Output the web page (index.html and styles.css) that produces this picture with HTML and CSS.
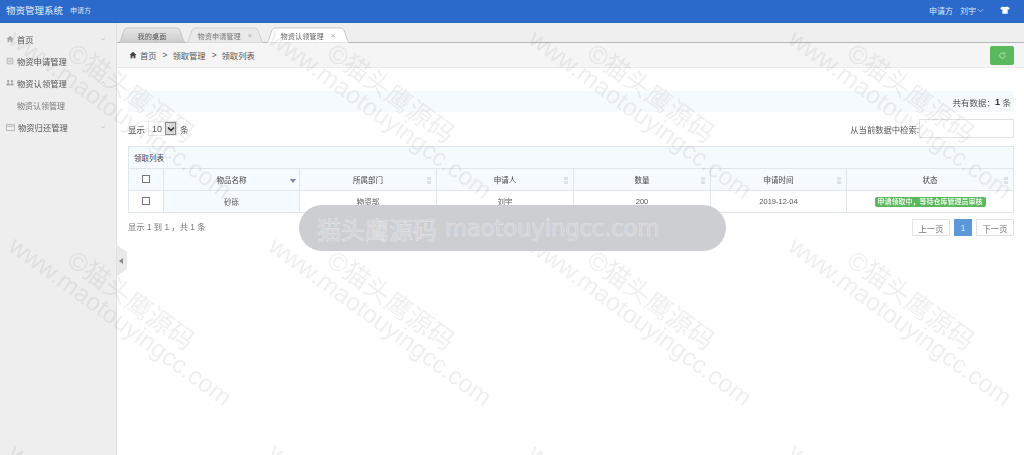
FILE: index.html
```html
<!DOCTYPE html>
<html lang="zh-CN">
<head>
<meta charset="utf-8">
<title>物资管理系统</title>
<link rel="stylesheet" href="styles.css">
</head>
<body>
<div class="app">
  <header class="topbar">
    <div class="brand"><span class="brand-name">物资管理系统</span><span class="brand-role">申请方</span></div>
    <div class="top-right">
      <span>申请方</span>
      <span class="user">刘宇<svg class="chev" viewBox="0 0 8 5"><path d="M1 1l3 3 3-3" fill="none" stroke="#dbe6f7" stroke-width=".8"/></svg></span>
      <svg class="shirt" viewBox="0 0 12 10"><path d="M3.600 .5L0 2.400l1.300 2.300 1.400-.6V9.600h6.600V4.100l1.400.6L12 2.400 8.400 .5C7.900 1.600 4.100 1.600 3.600 .5z" fill="#fff"/></svg>
    </div>
  </header>
  <div class="body-row">
    <aside class="sidebar">
      <div class="nav-item"><svg class="nav-icon" viewBox="0 0 10 10"><path d="M5 1L.5 5h1.500v4h2.200V6.500h1.600V9H8V5h1.500z" fill="#a8a8a8"/></svg><span class="nav-text">首页</span><svg class="nav-chev" viewBox="0 0 8 5"><path d="M1 1l3 3 3-3" fill="none" stroke="#bdbdbd" stroke-width=".8"/></svg></div>
      <div class="nav-item"><svg class="nav-icon" viewBox="0 0 10 10"><path d="M1.500 1.500h7v7h-7zM3 4h4M3 6h4" fill="none" stroke="#aaa"/></svg><span class="nav-text">物资申请管理</span></div>
      <div class="nav-item"><svg class="nav-icon" viewBox="0 0 10 10"><path d="M.5 8c0-2 .8-3 2.200-3S5 6 5 8zM5.500 8c0-2 .8-3 2-3s2 1 2 3zM2.700 4.300a1.500 1.500 0 1 0 0-3 1.500 1.500 0 0 0 0 3zM7.400 4.300a1.500 1.500 0 1 0 0-3 1.500 1.500 0 0 0 0 3z" fill="#a5a5a5"/></svg><span class="nav-text">物资认领管理</span><svg class="nav-chev" viewBox="0 0 8 5"><path d="M1 4l3-3 3 3" fill="none" stroke="#bdbdbd" stroke-width=".8"/></svg></div>
      <div class="nav-item nav-sub"><span class="nav-text">物资认领管理</span></div>
      <div class="nav-item"><svg class="nav-icon nav-icon-wide" viewBox="0 0 12 9"><path d="M.5 .5h11v8H.5zM.5 3h11" fill="none" stroke="#aaa"/></svg><span class="nav-text">物资归还管理</span><svg class="nav-chev" viewBox="0 0 8 5"><path d="M1 1l3 3 3-3" fill="none" stroke="#bdbdbd" stroke-width=".8"/></svg></div>
      <div class="collapse-handle"><span class="collapse-arrow"></span></div>
    </aside>
    <main class="main">
      <div class="tabs">
        <div class="tab tab-first"><svg class="tab-shape" viewBox="0 0 68 16" preserveAspectRatio="none"><path d="M0 16C4 16 4 1 9 1H59C64 1 64 16 68 16Z" fill="url(#tabgrey)" stroke="#bcbcbc" stroke-width=".7"/><defs><linearGradient id="tabgrey" x1="0" y1="0" x2="0" y2="1"><stop offset="0" stop-color="#e6e6e6"/><stop offset="1" stop-color="#cbcbcb"/></linearGradient></defs></svg><span class="tab-label">我的桌面</span></div>
        <div class="tab tab-dim"><svg class="tab-shape" viewBox="0 0 78 16" preserveAspectRatio="none"><path d="M0 16C4 16 4 1 9 1H69C74 1 74 16 78 16Z" fill="#e9e9e9" stroke="#c4c4c4" stroke-width=".7"/></svg><span class="tab-label">物资申请管理</span><span class="tab-x">×</span></div>
        <div class="tab tab-active"><svg class="tab-shape" viewBox="0 0 84 16" preserveAspectRatio="none"><path d="M0 16C4 16 4 1 9 1H75C80 1 80 16 84 16Z" fill="#fff" stroke="#b5b5b5" stroke-width=".7"/></svg><span class="tab-label">物资认领管理</span><span class="tab-x">×</span></div>
      </div>
      <div class="crumbs">
        <div class="crumb-text"><svg class="crumb-home" viewBox="0 0 10 10"><path d="M5 1L.5 5h1.500v4h2.200V6.500h1.600V9H8V5h1.500z" fill="#444"/></svg>首页<span class="crumb-sep">&gt;</span>领取管理<span class="crumb-sep">&gt;</span>领取列表</div>
        <div class="refresh"><svg viewBox="0 0 10 10"><path d="M8 5a3 3 0 1 1-1-2.200" fill="none" stroke="#d5efd5" stroke-width=".8"/><path d="M7.600 1.300v2h-2" fill="none" stroke="#d5efd5" stroke-width=".6"/></svg></div>
      </div>
      <div class="content">
        <div class="info-bar">共有数据：<b>1</b>&nbsp;条</div>
        <div class="controls">
          <div class="length">显示<span class="select"><span class="select-val">10</span><span class="select-btn"><svg viewBox="0 0 8 6"><path d="M1 1.500l3 3 3-3" fill="none" stroke="#222" stroke-width="1.400"/></svg></span></span>条</div>
          <div class="search">从当前数据中检索:<span class="search-box"></span></div>
        </div>
        <table class="grid">
          <colgroup>
            <col class="col-check"><col class="col-name"><col class="col-a"><col class="col-a"><col class="col-a"><col class="col-b"><col class="col-status">
          </colgroup>
          <thead>
            <tr><th colspan="7" class="grid-title">领取列表</th></tr>
            <tr>
              <th><span class="check"></span></th>
              <th class="sorted">物品名称<span class="sort-on"></span></th>
              <th>所属部门<span class="sort"></span></th>
              <th>申请人<span class="sort"></span></th>
              <th>数量<span class="sort"></span></th>
              <th>申请时间<span class="sort"></span></th>
              <th>状态<span class="sort"></span></th>
            </tr>
          </thead>
          <tbody>
            <tr>
              <td><span class="check"></span></td>
              <td class="cell-sorted">砂砾</td>
              <td>物资部</td>
              <td>刘宇</td>
              <td>200</td>
              <td>2019-12-04</td>
              <td><span class="badge">申请领取中，等待仓库管理员审核</span></td>
            </tr>
          </tbody>
        </table>
        <div class="foot">
          <div class="foot-info">显示 1 到 1 ，共 1 条</div>
          <div class="pager"><span class="page">上一页</span><span class="page page-on">1</span><span class="page">下一页</span></div>
        </div>
      </div>
    </main>
  </div>
  <div class="marks" aria-hidden="true">
    <div class="mark-tile"><span class="mark-a">©猫头鹰源码</span><span class="mark-b">www.maotouyingcc.com</span></div>
    <div class="mark-tile"><span class="mark-a">©猫头鹰源码</span><span class="mark-b">www.maotouyingcc.com</span></div>
    <div class="mark-tile"><span class="mark-a">©猫头鹰源码</span><span class="mark-b">www.maotouyingcc.com</span></div>
    <div class="mark-tile"><span class="mark-a">©猫头鹰源码</span><span class="mark-b">www.maotouyingcc.com</span></div>
    <div class="mark-tile"><span class="mark-a">©猫头鹰源码</span><span class="mark-b">www.maotouyingcc.com</span></div>
    <div class="mark-tile"><span class="mark-a">©猫头鹰源码</span><span class="mark-b">www.maotouyingcc.com</span></div>
    <div class="mark-tile"><span class="mark-a">©猫头鹰源码</span><span class="mark-b">www.maotouyingcc.com</span></div>
    <div class="mark-tile"><span class="mark-a">©猫头鹰源码</span><span class="mark-b">www.maotouyingcc.com</span></div>
    <div class="mark-tile"><span class="mark-a">©猫头鹰源码</span><span class="mark-b">www.maotouyingcc.com</span></div>
    <div class="mark-tile"><span class="mark-a">©猫头鹰源码</span><span class="mark-b">www.maotouyingcc.com</span></div>
    <div class="mark-tile"><span class="mark-a">©猫头鹰源码</span><span class="mark-b">www.maotouyingcc.com</span></div>
    <div class="mark-tile"><span class="mark-a">©猫头鹰源码</span><span class="mark-b">www.maotouyingcc.com</span></div>
  </div>
  <div class="pill"><span class="pill-cn">猫头鹰源码</span><span class="pill-en">maotouyingcc.com</span></div>
</div>
</body>
</html>
```
FILE: styles.css
```css
* { box-sizing: border-box; }
html, body { margin: 0; height: 100%; overflow: hidden; background: #fff; }
body { font-family: "Liberation Sans", "Noto Sans CJK SC", sans-serif; font-size: 8px; color: #555; }
.app { position: relative; width: 1024px; height: 455px; overflow: hidden; display: flex; flex-direction: column; filter: blur(.3px); }

.topbar { height: 23px; flex: none; background: #2b6aca; color: #fff; display: flex; align-items: center; justify-content: space-between; padding: 0 14px 2px 6px; border-bottom: 1px solid #2a64bb; }
.brand { display: flex; align-items: center; gap: 7px; }
.brand-name { font-size: 9.500px; color: #e4ecf9; }
.brand-role { font-size: 7px; color: #dbe6f7; }
.top-right { display: flex; align-items: center; gap: 7px; font-size: 8px; color: #dbe6f7; }
.user { display: flex; align-items: center; gap: 1px; margin-right: 9px; }
.chev { width: 7px; height: 5px; }
.shirt { width: 10px; height: 8px; }

.body-row { flex: 1; display: flex; min-height: 0; }
.sidebar { position: relative; width: 117px; flex: none; background: #eeeeee; border-right: 1px solid #e0e0e0; padding-top: 5px; }
.nav-item { height: 22px; display: flex; align-items: center; padding: 0 8px 0 6px; font-size: 8.300px; color: #555; position: relative; }
.nav-icon { width: 8px; height: 8px; margin-right: 3px; flex: none; }
.nav-icon-wide { width: 9px; height: 7px; margin-right: 3px; }
.nav-chev { position: absolute; right: 10px; top: 9px; width: 6px; height: 4px; }
.nav-sub { padding-left: 17px; color: #777; font-size: 8px; }
.collapse-handle { position: absolute; right: -11px; top: 222px; width: 10px; height: 31px; background: #e9e9e9; clip-path: polygon(0 0, 100% 22%, 100% 78%, 0 100%); display: flex; align-items: center; padding-left: 2px; }
.collapse-arrow { width: 0; height: 0; border: 3px solid transparent; border-left-width: 0; border-right: 4px solid #8c8c8c; }

.main { flex: 1; min-width: 0; display: flex; flex-direction: column; }
.tabs { height: 20px; flex: none; background: #efefef; border-bottom: 1px solid #b5b5b5; display: flex; align-items: flex-end; padding-left: 1px; font-size: 7.200px; }
.tab { position: relative; height: 16px; width: 68px; display: flex; align-items: center; justify-content: center; color: #555; margin-bottom: -1px; padding-top: 1px; }
.tab-shape { position: absolute; inset: 0; width: 100%; height: 100%; }
.tab-label, .tab-x { position: relative; }
.tab-dim { width: 78px; color: #777; }
.tab-active { width: 84px; margin-left: 2px; color: #666; }
.tab-x { margin-left: 7px; color: #aaa; font-size: 8px; }

.crumbs { height: 25px; flex: none; background: #f5f5f5; border-bottom: 1px solid #ebebeb; display: flex; align-items: center; justify-content: space-between; padding: 0 10px 0 12px; font-size: 8.300px; color: #555; }
.crumb-text { display: flex; align-items: center; }
.crumb-home { width: 8px; height: 8px; margin-right: 3px; }
.crumb-sep { margin: 0 5px 0 6px; }
.refresh { width: 24px; height: 19px; background: #5cb85c; border-radius: 2px; display: flex; align-items: center; justify-content: center; }
.refresh svg { width: 9px; height: 9px; }

.content { flex: 1; padding: 23px 10px 0 11px; position: relative; }
.info-bar { height: 21px; background: #f5fafe; display: flex; align-items: center; justify-content: flex-end; padding-right: 3px; color: #555; font-size: 8.500px; }
.info-bar b { color: #333; font-size: 9px; }
.controls { height: 34px; display: flex; align-items: center; justify-content: space-between; padding-bottom: 4px; padding-top: 3px; font-size: 8.500px; }
.length { display: flex; align-items: center; }
.select { display: inline-flex; align-items: center; border: 1px solid #e8e8e8; height: 15px; margin: 0 3px; padding-left: 3px; }
.select-val { font-size: 9px; margin-right: 3px; }
.select-btn { width: 11px; height: 13px; background: #dedede; border: 1px solid #8a8a8a; display: flex; align-items: center; justify-content: center; }
.select-btn svg { width: 8px; height: 6px; }
.search { display: flex; align-items: center; font-size: 8.300px; }
.search-box { width: 95px; height: 19px; border: 1px solid #e2e2e2; background: #fff; }

.grid { width: 885px; border-collapse: collapse; table-layout: fixed; font-size: 7.500px; color: #555; }
.grid th, .grid td { border: 1px solid #dfe6ee; height: 22px; padding: 0; text-align: center; vertical-align: middle; position: relative; }
.grid th { background: #f5fafe; font-weight: normal; color: #444; }
.grid .grid-title { text-align: left; padding-left: 5px; color: #444; }
.col-check { width: 35px; }
.col-name { width: 136px; }
.col-a { width: 137px; }
.col-b { width: 136px; }
.col-status { width: 167px; }
.check { display: inline-block; width: 8px; height: 8px; border: 1px solid #777; background: #fff; vertical-align: middle; margin-top: -3px; }
.cell-sorted { background: #f5fafe; }
.sort { position: absolute; right: 5px; top: 8px; width: 4px; height: 7px; background: linear-gradient(#dde2e8 40%, transparent 40%, transparent 60%, #dde2e8 60%); }
.sort-on { position: absolute; right: 3px; top: 10px; width: 0; height: 0; border: 3px solid transparent; border-bottom-width: 0; border-top: 4px solid #7a86ad; }
.badge { display: inline-block; background: #5cb85c; color: #e8f6e8; border-radius: 2px; padding: 0 3px; height: 10px; line-height: 10px; font-size: 7px; font-weight: bold; vertical-align: middle; white-space: nowrap; }

.foot { display: flex; justify-content: space-between; align-items: center; padding-top: 6px; }
.foot-info { font-size: 8.300px; color: #777; margin-top: -3px; }
.pager { display: flex; gap: 4px; }
.page { height: 17px; min-width: 38px; border: 1px solid #e2e2e2; display: flex; align-items: center; justify-content: center; font-size: 8.300px; color: #777; }
.page-on { min-width: 18px; background: #5a98d8; border-color: #5a98d8; color: #dbeafa; }

.marks { position: absolute; inset: 0; display: grid; grid-template-columns: repeat(4, 260px); grid-auto-rows: 207px; margin-top: 21px; pointer-events: none; }
.mark-tile { position: relative; }
.mark-a, .mark-b { position: absolute; white-space: nowrap; transform-origin: 0 50%; transform: rotate(36deg); color: rgba(120, 120, 120, .12); }
.mark-a { left: 72px; top: 8px; font-size: 26px; }
.mark-b { left: 12px; top: 0; font-size: 25px; }

.pill { position: absolute; left: 299px; top: 205px; width: 427px; height: 46px; border-radius: 23px; background: #cdced2; color: #cfd0d4; -webkit-text-stroke: .6px #e2e3e6; display: flex; align-items: center; gap: 8px; padding-left: 18px; white-space: nowrap; }
.pill-cn { font-size: 24px; }
.pill-en { font-family: "DejaVu Sans", sans-serif; font-size: 22.500px; }
```
